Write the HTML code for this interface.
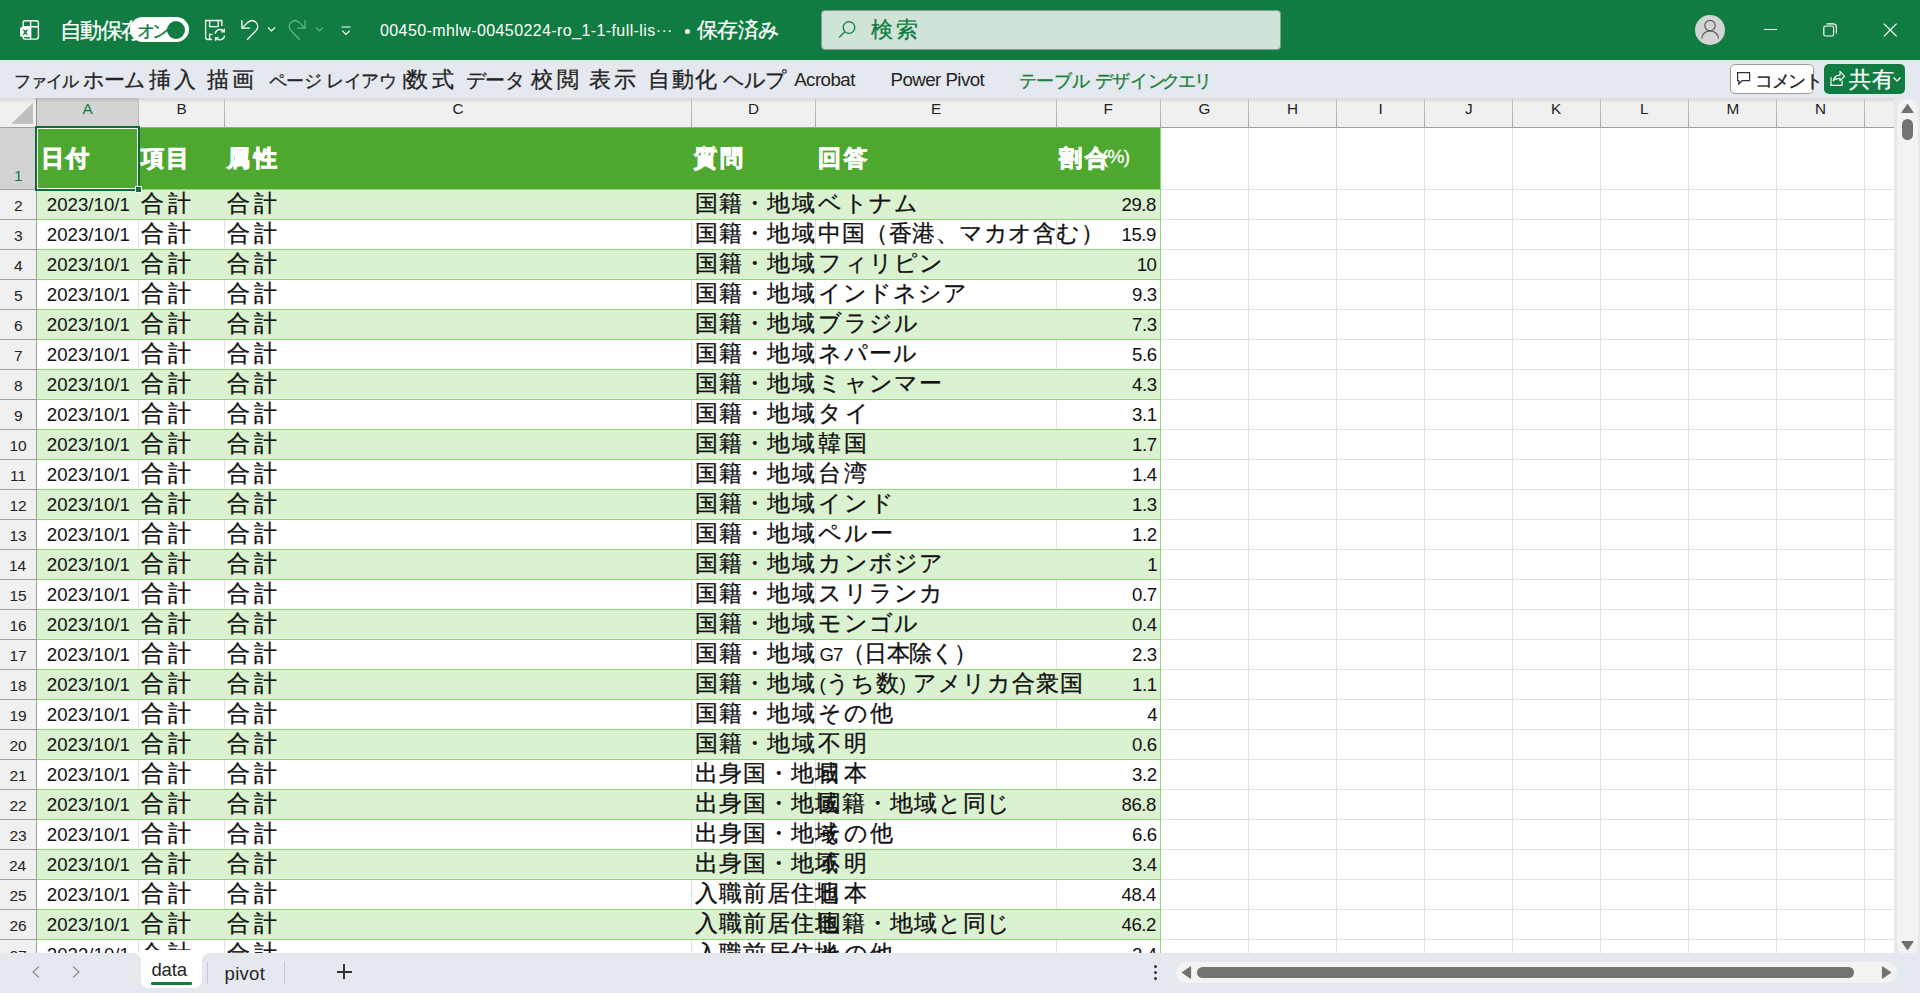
<!DOCTYPE html>
<html lang="ja"><head><meta charset="utf-8"><title>Excel - data</title>
<style>
html,body{margin:0;padding:0;width:1920px;height:993px;overflow:hidden;background:#fff}
body{position:relative;font-family:"Liberation Sans",sans-serif}
.r,.a,.t{position:absolute}
.t{white-space:nowrap;line-height:40px}
</style></head><body>
<div class="r" style="left:0px;top:0px;width:1920px;height:60px;background:#107C41"></div>
<svg class="a" style="left:14px;top:14px" width="32" height="32" viewBox="0 0 32 32" fill="none" stroke="#fff" stroke-width="1.4">
<path d="M11 6.7h11.3q2.1 0 2.1 2.1v14.3q0 2-2 2H11q-1.8 0-1.8-1.8V8.7q0-2 1.8-2z"/><path d="M16.6 6.7v18.4M9.2 12.7h15.2"/>
<rect x="6.1" y="12.9" width="11" height="10.1" rx="1.8" fill="#fff" stroke="none"/>
<path d="M9.4 15.6l4 5.2M13.4 15.6l-4 5.2" stroke="#107C41" stroke-width="1.5"/></svg>
<div class="t" style="left:60.00px;top:13px;font-size:16.00px;color:#fff;letter-spacing:-1.667px"><span style="font-size:21.50px;line-height:0;-webkit-text-stroke:0.3px">自動保存</span></div>
<div class="r" style="left:130px;top:17px;width:59px;height:25px;background:#fff;border-radius:12.5px"></div>
<div class="r" style="left:167px;top:21px;width:18px;height:18px;background:#107C41;border-radius:50%"></div>
<div class="t" style="left:137.00px;top:12px;font-size:15.00px;color:#107C41;letter-spacing:-3.000px"><span style="font-size:17.50px;line-height:0;-webkit-text-stroke:0.3px">オン</span></div>
<svg class="a" style="left:203px;top:18px" width="24" height="24" viewBox="0 0 24 24" fill="none" stroke="#fff" stroke-width="1.3">
<path d="M9 21.5H4.8q-2.2 0-2.2-2.2V2.5h16.2v5.6"/><path d="M6.6 2.5v6.2h8.6V2.5"/><path d="M6.6 21.5v-5.2h3"/>
<path d="M12.2 15.6a5 5 0 0 1 8.8-2.2M21.6 17.6a5 5 0 0 1-8.8 2.4"/><path d="M21.3 10.7v3.2h-3.2M12.5 22.8v-3.2h3.2"/></svg>
<svg class="a" style="left:239px;top:18px" width="24" height="24" viewBox="0 0 24 24" fill="none" stroke="#fff" stroke-width="1.3">
<path d="M2.9 2.3v7.9h8"/><path d="M3.2 9.9L8.8 4.4q4.6-4 8.4.2 3.4 4.1-.5 8.4L8.2 21.7"/></svg>
<svg class="a" style="left:266px;top:25px" width="11" height="9" viewBox="0 0 11 9" fill="none" stroke="#fff" stroke-width="1.2"><path d="M2 2.5l3.5 3.5 3.5-3.5"/></svg>
<svg class="a" style="left:284px;top:18px" width="24" height="24" viewBox="0 0 24 24" fill="none" stroke="#5fb487" stroke-width="1.3">
<path d="M21.1 2.3v7.9h-8"/><path d="M20.8 9.9L15.2 4.4q-4.6-4-8.4.2-3.4 4.1.5 8.4l8.5 8.7"/></svg>
<svg class="a" style="left:314px;top:25px" width="11" height="9" viewBox="0 0 11 9" fill="none" stroke="#5fb487" stroke-width="1.2"><path d="M2 2.5l3.5 3.5 3.5-3.5"/></svg>
<svg class="a" style="left:339px;top:24px" width="14" height="14" viewBox="0 0 14 14" fill="none" stroke="#fff" stroke-width="1.2"><path d="M2.5 3h9M3.2 6.6l3.8 3.8 3.8-3.8"/></svg>
<div class="t" style="left:380.00px;top:11px;font-size:16.00px;color:#fff;letter-spacing:0.405px">00450-mhlw-00450224-ro_1-1-full-lis···</div>
<div class="r" style="left:685px;top:29px;width:5px;height:5px;background:#fff;border-radius:50%"></div>
<div class="t" style="left:697.00px;top:12px;font-size:16.00px;color:#fff;letter-spacing:-0.667px"><span style="font-size:20.50px;line-height:0;-webkit-text-stroke:0.3px">保存済み</span></div>
<svg class="a" style="left:760px;top:24px" width="16" height="12" viewBox="0 0 16 12" fill="none" stroke="#fff" stroke-width="1.3"><path d="M2 2.5l6 6 6-6"/></svg>
<div class="r" style="left:821px;top:10px;width:460px;height:40px;background:#CFE3D6;border:1px solid #8a9c90;box-sizing:border-box;border-radius:4px"></div>
<svg class="a" style="left:836px;top:19px" width="22" height="22" viewBox="0 0 22 22" fill="none" stroke="#107C41" stroke-width="1.3"><circle cx="13" cy="8.5" r="5.8"/><path d="M8.8 12.7L3 18.6"/></svg>
<div class="t" style="left:871.00px;top:12px;font-size:16.00px;color:#107C41;letter-spacing:3.000px"><span style="font-size:21.50px;line-height:0;-webkit-text-stroke:0.3px">検索</span></div>
<div class="r" style="left:1695px;top:15px;width:30px;height:30px;background:#D4D4D4;border-radius:50%"></div>
<svg class="a" style="left:1699px;top:19px" width="22" height="22" viewBox="0 0 22 22" fill="none" stroke="#555" stroke-width="1.1"><circle cx="11" cy="6.6" r="5.2"/><path d="M2.7 19.6A8.4 7.6 0 0 1 19.5 19.6"/></svg>
<div class="r" style="left:1764px;top:29px;width:13px;height:1px;background:#fff"></div>
<svg class="a" style="left:1820px;top:20px" width="20" height="20" viewBox="0 0 20 20" fill="none" stroke="#fff" stroke-width="1.2"><rect x="3.8" y="6" width="9.8" height="10" rx="1.8"/><path d="M6.6 3.8h6.4q3.4 0 3.4 3.4v6.2"/></svg>
<svg class="a" style="left:1880px;top:20px" width="20" height="20" viewBox="0 0 20 20" fill="none" stroke="#fff" stroke-width="1.3"><path d="M3.8 3.6l12.8 12.8M16.6 3.6L3.8 16.4"/></svg>
<div class="r" style="left:0px;top:60px;width:1920px;height:38px;background:#E4E8EF"></div>
<div class="t" style="left:13.60px;top:62px;font-size:17.00px;color:#242424;letter-spacing:-0.867px"><span style="font-size:17.29px;line-height:0;-webkit-text-stroke:0.3px">ファイル</span></div>
<div class="t" style="left:83.00px;top:62px;font-size:17.00px;color:#242424;letter-spacing:-1.250px"><span style="font-size:20.77px;line-height:0;-webkit-text-stroke:0.3px">ホーム</span></div>
<div class="t" style="left:149.00px;top:62px;font-size:17.00px;color:#242424;letter-spacing:3.000px"><span style="font-size:22.00px;line-height:0;-webkit-text-stroke:0.3px">挿入</span></div>
<div class="t" style="left:207.00px;top:62px;font-size:17.00px;color:#242424;letter-spacing:3.000px"><span style="font-size:22.00px;line-height:0;-webkit-text-stroke:0.3px">描画</span></div>
<div class="t" style="left:268.50px;top:62px;font-size:17.00px;color:#242424;letter-spacing:-0.312px"><span style="font-size:17.81px;line-height:0;-webkit-text-stroke:0.3px">ページ</span> <span style="font-size:17.81px;line-height:0;-webkit-text-stroke:0.3px">レイアウト</span></div>
<div class="t" style="left:406.30px;top:62px;font-size:17.00px;color:#242424;letter-spacing:3.400px"><span style="font-size:22.00px;line-height:0;-webkit-text-stroke:0.3px">数式</span></div>
<div class="t" style="left:465.50px;top:62px;font-size:17.00px;color:#242424;letter-spacing:-0.100px"><span style="font-size:20.44px;line-height:0;-webkit-text-stroke:0.3px">データ</span></div>
<div class="t" style="left:531.30px;top:62px;font-size:17.00px;color:#242424;letter-spacing:3.400px"><span style="font-size:22.00px;line-height:0;-webkit-text-stroke:0.3px">校閲</span></div>
<div class="t" style="left:589.00px;top:62px;font-size:17.00px;color:#242424;letter-spacing:3.400px"><span style="font-size:22.00px;line-height:0;-webkit-text-stroke:0.3px">表示</span></div>
<div class="t" style="left:648.00px;top:62px;font-size:17.00px;color:#242424;letter-spacing:1.500px"><span style="font-size:22.00px;line-height:0;-webkit-text-stroke:0.3px">自動化</span></div>
<div class="t" style="left:723.00px;top:62px;font-size:17.00px;color:#242424;letter-spacing:-1.000px"><span style="font-size:21.00px;line-height:0;-webkit-text-stroke:0.3px">ヘルプ</span></div>
<div class="t" style="left:794.20px;top:60px;font-size:18.70px;color:#242424;letter-spacing:-0.533px">Acrobat</div>
<div class="t" style="left:890.60px;top:60px;font-size:18.70px;color:#242424;letter-spacing:-0.560px">Power Pivot</div>
<div class="t" style="left:1018.50px;top:62px;font-size:17.00px;color:#1A7F37;letter-spacing:-0.125px"><span style="font-size:18.04px;line-height:0;-webkit-text-stroke:0.3px">テーブル</span> <span style="font-size:18.04px;line-height:0;-webkit-text-stroke:0.3px">デザイン</span></div>
<div class="t" style="left:1161.70px;top:62px;font-size:17.00px;color:#1A7F37;letter-spacing:-1.850px"><span style="font-size:17.87px;line-height:0;-webkit-text-stroke:0.3px">クエリ</span></div>
<div class="r" style="left:1730px;top:64px;width:84px;height:30px;background:#fff;border:1px solid #9C9C9C;box-sizing:border-box;border-radius:5px"></div>
<svg class="a" style="left:1735px;top:70px" width="18" height="18" viewBox="0 0 18 18" fill="none" stroke="#333" stroke-width="1.2"><path d="M2.6 2.6h12v8.1H7.2l-3.4 3.3v-3.3H2.6z"/></svg>
<div class="t" style="left:1755.00px;top:62px;font-size:17.00px;color:#242424;letter-spacing:-1.333px"><span style="font-size:18.20px;line-height:0;-webkit-text-stroke:0.3px">コメント</span></div>
<div class="r" style="left:1824px;top:64px;width:81px;height:30px;background:#107C41;border-radius:5px"></div>
<svg class="a" style="left:1824px;top:64px" width="26" height="30" viewBox="0 0 26 30" fill="none" stroke="#fff" stroke-width="1.15" stroke-linejoin="round">
<path d="M7 13.3v8.1h11.1v-5"/><path d="M9.3 16.6q1.2-5.4 6.7-5.5V7.4l4.6 4.9-4.6 4.4v-2.4q-4.3 0-6.7 2.3z"/></svg>
<div class="t" style="left:1849.00px;top:62px;font-size:17.00px;color:#fff;letter-spacing:1.000px"><span style="font-size:22.00px;line-height:0;-webkit-text-stroke:0.3px">共有</span></div>
<svg class="a" style="left:1891px;top:75px" width="12" height="9" viewBox="0 0 12 9" fill="none" stroke="#fff" stroke-width="1.3"><path d="M2.5 2.5l3.5 3.5 3.5-3.5"/></svg>
<div class="r" style="left:0px;top:98px;width:1894px;height:29px;background:#F0F0F0"></div>
<div class="r" style="left:37px;top:98px;width:101px;height:29px;background:#D3D3D3"></div>
<div class="r" style="left:0px;top:98px;width:1894px;height:5px;background:linear-gradient(rgba(0,0,0,0.1),rgba(0,0,0,0))"></div>
<div class="r" style="left:0px;top:127px;width:1894px;height:1px;background:#A0A0A0"></div>
<svg class="a" style="left:0px;top:98px" width="36" height="29"><path d="M11.5 25.7L33 4.8v20.9z" fill="#BDBDBD"/></svg>
<div class="r" style="left:36px;top:98px;width:1px;height:29px;background:linear-gradient(#C4C4C4,#A8A8A8)"></div>
<div class="r" style="left:138px;top:98px;width:1px;height:29px;background:linear-gradient(#C4C4C4,#A8A8A8)"></div>
<div class="r" style="left:224px;top:98px;width:1px;height:29px;background:linear-gradient(#C4C4C4,#A8A8A8)"></div>
<div class="r" style="left:691px;top:98px;width:1px;height:29px;background:linear-gradient(#C4C4C4,#A8A8A8)"></div>
<div class="r" style="left:815px;top:98px;width:1px;height:29px;background:linear-gradient(#C4C4C4,#A8A8A8)"></div>
<div class="r" style="left:1056px;top:98px;width:1px;height:29px;background:linear-gradient(#C4C4C4,#A8A8A8)"></div>
<div class="r" style="left:1160px;top:98px;width:1px;height:29px;background:linear-gradient(#C4C4C4,#A8A8A8)"></div>
<div class="r" style="left:1248px;top:98px;width:1px;height:29px;background:linear-gradient(#C4C4C4,#A8A8A8)"></div>
<div class="r" style="left:1336px;top:98px;width:1px;height:29px;background:linear-gradient(#C4C4C4,#A8A8A8)"></div>
<div class="r" style="left:1424px;top:98px;width:1px;height:29px;background:linear-gradient(#C4C4C4,#A8A8A8)"></div>
<div class="r" style="left:1512px;top:98px;width:1px;height:29px;background:linear-gradient(#C4C4C4,#A8A8A8)"></div>
<div class="r" style="left:1600px;top:98px;width:1px;height:29px;background:linear-gradient(#C4C4C4,#A8A8A8)"></div>
<div class="r" style="left:1688px;top:98px;width:1px;height:29px;background:linear-gradient(#C4C4C4,#A8A8A8)"></div>
<div class="r" style="left:1776px;top:98px;width:1px;height:29px;background:linear-gradient(#C4C4C4,#A8A8A8)"></div>
<div class="r" style="left:1864px;top:98px;width:1px;height:29px;background:linear-gradient(#C4C4C4,#A8A8A8)"></div>
<div class="r" style="left:36px;top:98px;width:1px;height:30px;background:#8C8C8C"></div>
<div class="t" style="left:82.50px;top:89px;font-size:15.30px;color:#107C41">A</div>
<div class="t" style="left:176.50px;top:89px;font-size:15.30px;color:#222">B</div>
<div class="t" style="left:452.50px;top:89px;font-size:15.30px;color:#222">C</div>
<div class="t" style="left:748.00px;top:89px;font-size:15.30px;color:#222">D</div>
<div class="t" style="left:931.00px;top:89px;font-size:15.30px;color:#222">E</div>
<div class="t" style="left:1103.50px;top:89px;font-size:15.30px;color:#222">F</div>
<div class="t" style="left:1198.50px;top:89px;font-size:15.30px;color:#222">G</div>
<div class="t" style="left:1287.00px;top:89px;font-size:15.30px;color:#222">H</div>
<div class="t" style="left:1378.50px;top:89px;font-size:15.30px;color:#222">I</div>
<div class="t" style="left:1465.00px;top:89px;font-size:15.30px;color:#222">J</div>
<div class="t" style="left:1551.00px;top:89px;font-size:15.30px;color:#222">K</div>
<div class="t" style="left:1640.00px;top:89px;font-size:15.30px;color:#222">L</div>
<div class="t" style="left:1726.50px;top:89px;font-size:15.30px;color:#222">M</div>
<div class="t" style="left:1815.00px;top:89px;font-size:15.30px;color:#222">N</div>
<div class="r" style="left:37px;top:128px;width:1857px;height:825px;background:#fff"></div>
<div class="r" style="left:1248px;top:128px;width:1px;height:825px;background:#E1E1E1"></div>
<div class="r" style="left:1336px;top:128px;width:1px;height:825px;background:#E1E1E1"></div>
<div class="r" style="left:1424px;top:128px;width:1px;height:825px;background:#E1E1E1"></div>
<div class="r" style="left:1512px;top:128px;width:1px;height:825px;background:#E1E1E1"></div>
<div class="r" style="left:1600px;top:128px;width:1px;height:825px;background:#E1E1E1"></div>
<div class="r" style="left:1688px;top:128px;width:1px;height:825px;background:#E1E1E1"></div>
<div class="r" style="left:1776px;top:128px;width:1px;height:825px;background:#E1E1E1"></div>
<div class="r" style="left:1864px;top:128px;width:1px;height:825px;background:#E1E1E1"></div>
<div class="r" style="left:1161px;top:189px;width:733px;height:1px;background:#E1E1E1"></div>
<div class="r" style="left:1161px;top:219px;width:733px;height:1px;background:#E1E1E1"></div>
<div class="r" style="left:1161px;top:249px;width:733px;height:1px;background:#E1E1E1"></div>
<div class="r" style="left:1161px;top:279px;width:733px;height:1px;background:#E1E1E1"></div>
<div class="r" style="left:1161px;top:309px;width:733px;height:1px;background:#E1E1E1"></div>
<div class="r" style="left:1161px;top:339px;width:733px;height:1px;background:#E1E1E1"></div>
<div class="r" style="left:1161px;top:369px;width:733px;height:1px;background:#E1E1E1"></div>
<div class="r" style="left:1161px;top:399px;width:733px;height:1px;background:#E1E1E1"></div>
<div class="r" style="left:1161px;top:429px;width:733px;height:1px;background:#E1E1E1"></div>
<div class="r" style="left:1161px;top:459px;width:733px;height:1px;background:#E1E1E1"></div>
<div class="r" style="left:1161px;top:489px;width:733px;height:1px;background:#E1E1E1"></div>
<div class="r" style="left:1161px;top:519px;width:733px;height:1px;background:#E1E1E1"></div>
<div class="r" style="left:1161px;top:549px;width:733px;height:1px;background:#E1E1E1"></div>
<div class="r" style="left:1161px;top:579px;width:733px;height:1px;background:#E1E1E1"></div>
<div class="r" style="left:1161px;top:609px;width:733px;height:1px;background:#E1E1E1"></div>
<div class="r" style="left:1161px;top:639px;width:733px;height:1px;background:#E1E1E1"></div>
<div class="r" style="left:1161px;top:669px;width:733px;height:1px;background:#E1E1E1"></div>
<div class="r" style="left:1161px;top:699px;width:733px;height:1px;background:#E1E1E1"></div>
<div class="r" style="left:1161px;top:729px;width:733px;height:1px;background:#E1E1E1"></div>
<div class="r" style="left:1161px;top:759px;width:733px;height:1px;background:#E1E1E1"></div>
<div class="r" style="left:1161px;top:789px;width:733px;height:1px;background:#E1E1E1"></div>
<div class="r" style="left:1161px;top:819px;width:733px;height:1px;background:#E1E1E1"></div>
<div class="r" style="left:1161px;top:849px;width:733px;height:1px;background:#E1E1E1"></div>
<div class="r" style="left:1161px;top:879px;width:733px;height:1px;background:#E1E1E1"></div>
<div class="r" style="left:1161px;top:909px;width:733px;height:1px;background:#E1E1E1"></div>
<div class="r" style="left:1161px;top:939px;width:733px;height:1px;background:#E1E1E1"></div>
<div class="r" style="left:138px;top:220px;width:1px;height:29px;background:#E1E1E1"></div>
<div class="r" style="left:224px;top:220px;width:1px;height:29px;background:#E1E1E1"></div>
<div class="r" style="left:691px;top:220px;width:1px;height:29px;background:#E1E1E1"></div>
<div class="r" style="left:815px;top:220px;width:1px;height:29px;background:#E1E1E1"></div>
<div class="r" style="left:1056px;top:220px;width:1px;height:29px;background:#E1E1E1"></div>
<div class="r" style="left:138px;top:280px;width:1px;height:29px;background:#E1E1E1"></div>
<div class="r" style="left:224px;top:280px;width:1px;height:29px;background:#E1E1E1"></div>
<div class="r" style="left:691px;top:280px;width:1px;height:29px;background:#E1E1E1"></div>
<div class="r" style="left:815px;top:280px;width:1px;height:29px;background:#E1E1E1"></div>
<div class="r" style="left:1056px;top:280px;width:1px;height:29px;background:#E1E1E1"></div>
<div class="r" style="left:138px;top:340px;width:1px;height:29px;background:#E1E1E1"></div>
<div class="r" style="left:224px;top:340px;width:1px;height:29px;background:#E1E1E1"></div>
<div class="r" style="left:691px;top:340px;width:1px;height:29px;background:#E1E1E1"></div>
<div class="r" style="left:815px;top:340px;width:1px;height:29px;background:#E1E1E1"></div>
<div class="r" style="left:1056px;top:340px;width:1px;height:29px;background:#E1E1E1"></div>
<div class="r" style="left:138px;top:400px;width:1px;height:29px;background:#E1E1E1"></div>
<div class="r" style="left:224px;top:400px;width:1px;height:29px;background:#E1E1E1"></div>
<div class="r" style="left:691px;top:400px;width:1px;height:29px;background:#E1E1E1"></div>
<div class="r" style="left:815px;top:400px;width:1px;height:29px;background:#E1E1E1"></div>
<div class="r" style="left:1056px;top:400px;width:1px;height:29px;background:#E1E1E1"></div>
<div class="r" style="left:138px;top:460px;width:1px;height:29px;background:#E1E1E1"></div>
<div class="r" style="left:224px;top:460px;width:1px;height:29px;background:#E1E1E1"></div>
<div class="r" style="left:691px;top:460px;width:1px;height:29px;background:#E1E1E1"></div>
<div class="r" style="left:815px;top:460px;width:1px;height:29px;background:#E1E1E1"></div>
<div class="r" style="left:1056px;top:460px;width:1px;height:29px;background:#E1E1E1"></div>
<div class="r" style="left:138px;top:520px;width:1px;height:29px;background:#E1E1E1"></div>
<div class="r" style="left:224px;top:520px;width:1px;height:29px;background:#E1E1E1"></div>
<div class="r" style="left:691px;top:520px;width:1px;height:29px;background:#E1E1E1"></div>
<div class="r" style="left:815px;top:520px;width:1px;height:29px;background:#E1E1E1"></div>
<div class="r" style="left:1056px;top:520px;width:1px;height:29px;background:#E1E1E1"></div>
<div class="r" style="left:138px;top:580px;width:1px;height:29px;background:#E1E1E1"></div>
<div class="r" style="left:224px;top:580px;width:1px;height:29px;background:#E1E1E1"></div>
<div class="r" style="left:691px;top:580px;width:1px;height:29px;background:#E1E1E1"></div>
<div class="r" style="left:815px;top:580px;width:1px;height:29px;background:#E1E1E1"></div>
<div class="r" style="left:1056px;top:580px;width:1px;height:29px;background:#E1E1E1"></div>
<div class="r" style="left:138px;top:640px;width:1px;height:29px;background:#E1E1E1"></div>
<div class="r" style="left:224px;top:640px;width:1px;height:29px;background:#E1E1E1"></div>
<div class="r" style="left:691px;top:640px;width:1px;height:29px;background:#E1E1E1"></div>
<div class="r" style="left:815px;top:640px;width:1px;height:29px;background:#E1E1E1"></div>
<div class="r" style="left:1056px;top:640px;width:1px;height:29px;background:#E1E1E1"></div>
<div class="r" style="left:138px;top:700px;width:1px;height:29px;background:#E1E1E1"></div>
<div class="r" style="left:224px;top:700px;width:1px;height:29px;background:#E1E1E1"></div>
<div class="r" style="left:691px;top:700px;width:1px;height:29px;background:#E1E1E1"></div>
<div class="r" style="left:815px;top:700px;width:1px;height:29px;background:#E1E1E1"></div>
<div class="r" style="left:1056px;top:700px;width:1px;height:29px;background:#E1E1E1"></div>
<div class="r" style="left:138px;top:760px;width:1px;height:29px;background:#E1E1E1"></div>
<div class="r" style="left:224px;top:760px;width:1px;height:29px;background:#E1E1E1"></div>
<div class="r" style="left:691px;top:760px;width:1px;height:29px;background:#E1E1E1"></div>
<div class="r" style="left:815px;top:760px;width:1px;height:29px;background:#E1E1E1"></div>
<div class="r" style="left:1056px;top:760px;width:1px;height:29px;background:#E1E1E1"></div>
<div class="r" style="left:138px;top:820px;width:1px;height:29px;background:#E1E1E1"></div>
<div class="r" style="left:224px;top:820px;width:1px;height:29px;background:#E1E1E1"></div>
<div class="r" style="left:691px;top:820px;width:1px;height:29px;background:#E1E1E1"></div>
<div class="r" style="left:815px;top:820px;width:1px;height:29px;background:#E1E1E1"></div>
<div class="r" style="left:1056px;top:820px;width:1px;height:29px;background:#E1E1E1"></div>
<div class="r" style="left:138px;top:880px;width:1px;height:29px;background:#E1E1E1"></div>
<div class="r" style="left:224px;top:880px;width:1px;height:29px;background:#E1E1E1"></div>
<div class="r" style="left:691px;top:880px;width:1px;height:29px;background:#E1E1E1"></div>
<div class="r" style="left:815px;top:880px;width:1px;height:29px;background:#E1E1E1"></div>
<div class="r" style="left:1056px;top:880px;width:1px;height:29px;background:#E1E1E1"></div>
<div class="r" style="left:138px;top:940px;width:1px;height:13px;background:#E1E1E1"></div>
<div class="r" style="left:224px;top:940px;width:1px;height:13px;background:#E1E1E1"></div>
<div class="r" style="left:691px;top:940px;width:1px;height:13px;background:#E1E1E1"></div>
<div class="r" style="left:815px;top:940px;width:1px;height:13px;background:#E1E1E1"></div>
<div class="r" style="left:1056px;top:940px;width:1px;height:13px;background:#E1E1E1"></div>
<div class="r" style="left:37px;top:128px;width:1123px;height:61px;background:#4EA72E"></div>
<div class="r" style="left:37px;top:190px;width:1123px;height:29px;background:#DAF2D0"></div>
<div class="r" style="left:37px;top:250px;width:1123px;height:29px;background:#DAF2D0"></div>
<div class="r" style="left:37px;top:310px;width:1123px;height:29px;background:#DAF2D0"></div>
<div class="r" style="left:37px;top:370px;width:1123px;height:29px;background:#DAF2D0"></div>
<div class="r" style="left:37px;top:430px;width:1123px;height:29px;background:#DAF2D0"></div>
<div class="r" style="left:37px;top:490px;width:1123px;height:29px;background:#DAF2D0"></div>
<div class="r" style="left:37px;top:550px;width:1123px;height:29px;background:#DAF2D0"></div>
<div class="r" style="left:37px;top:610px;width:1123px;height:29px;background:#DAF2D0"></div>
<div class="r" style="left:37px;top:670px;width:1123px;height:29px;background:#DAF2D0"></div>
<div class="r" style="left:37px;top:730px;width:1123px;height:29px;background:#DAF2D0"></div>
<div class="r" style="left:37px;top:790px;width:1123px;height:29px;background:#DAF2D0"></div>
<div class="r" style="left:37px;top:850px;width:1123px;height:29px;background:#DAF2D0"></div>
<div class="r" style="left:37px;top:910px;width:1123px;height:29px;background:#DAF2D0"></div>
<div class="r" style="left:37px;top:189px;width:1124px;height:1px;background:#8ED973"></div>
<div class="r" style="left:37px;top:219px;width:1124px;height:1px;background:#8ED973"></div>
<div class="r" style="left:37px;top:249px;width:1124px;height:1px;background:#8ED973"></div>
<div class="r" style="left:37px;top:279px;width:1124px;height:1px;background:#8ED973"></div>
<div class="r" style="left:37px;top:309px;width:1124px;height:1px;background:#8ED973"></div>
<div class="r" style="left:37px;top:339px;width:1124px;height:1px;background:#8ED973"></div>
<div class="r" style="left:37px;top:369px;width:1124px;height:1px;background:#8ED973"></div>
<div class="r" style="left:37px;top:399px;width:1124px;height:1px;background:#8ED973"></div>
<div class="r" style="left:37px;top:429px;width:1124px;height:1px;background:#8ED973"></div>
<div class="r" style="left:37px;top:459px;width:1124px;height:1px;background:#8ED973"></div>
<div class="r" style="left:37px;top:489px;width:1124px;height:1px;background:#8ED973"></div>
<div class="r" style="left:37px;top:519px;width:1124px;height:1px;background:#8ED973"></div>
<div class="r" style="left:37px;top:549px;width:1124px;height:1px;background:#8ED973"></div>
<div class="r" style="left:37px;top:579px;width:1124px;height:1px;background:#8ED973"></div>
<div class="r" style="left:37px;top:609px;width:1124px;height:1px;background:#8ED973"></div>
<div class="r" style="left:37px;top:639px;width:1124px;height:1px;background:#8ED973"></div>
<div class="r" style="left:37px;top:669px;width:1124px;height:1px;background:#8ED973"></div>
<div class="r" style="left:37px;top:699px;width:1124px;height:1px;background:#8ED973"></div>
<div class="r" style="left:37px;top:729px;width:1124px;height:1px;background:#8ED973"></div>
<div class="r" style="left:37px;top:759px;width:1124px;height:1px;background:#8ED973"></div>
<div class="r" style="left:37px;top:789px;width:1124px;height:1px;background:#8ED973"></div>
<div class="r" style="left:37px;top:819px;width:1124px;height:1px;background:#8ED973"></div>
<div class="r" style="left:37px;top:849px;width:1124px;height:1px;background:#8ED973"></div>
<div class="r" style="left:37px;top:879px;width:1124px;height:1px;background:#8ED973"></div>
<div class="r" style="left:37px;top:909px;width:1124px;height:1px;background:#8ED973"></div>
<div class="r" style="left:37px;top:939px;width:1124px;height:1px;background:#8ED973"></div>
<div class="r" style="left:1160px;top:128px;width:1px;height:825px;background:#8ED973"></div>
<div class="r" style="left:0px;top:128px;width:36px;height:825px;background:#F0F0F0"></div>
<div class="r" style="left:0px;top:128px;width:36px;height:61px;background:#D3D3D3"></div>
<div class="r" style="left:36px;top:128px;width:1px;height:825px;background:#9E9E9E"></div>
<div class="r" style="left:0px;top:189px;width:36px;height:1px;background:#A0A0A0"></div>
<div class="r" style="left:0px;top:219px;width:36px;height:1px;background:#A0A0A0"></div>
<div class="r" style="left:0px;top:249px;width:36px;height:1px;background:#A0A0A0"></div>
<div class="r" style="left:0px;top:279px;width:36px;height:1px;background:#A0A0A0"></div>
<div class="r" style="left:0px;top:309px;width:36px;height:1px;background:#A0A0A0"></div>
<div class="r" style="left:0px;top:339px;width:36px;height:1px;background:#A0A0A0"></div>
<div class="r" style="left:0px;top:369px;width:36px;height:1px;background:#A0A0A0"></div>
<div class="r" style="left:0px;top:399px;width:36px;height:1px;background:#A0A0A0"></div>
<div class="r" style="left:0px;top:429px;width:36px;height:1px;background:#A0A0A0"></div>
<div class="r" style="left:0px;top:459px;width:36px;height:1px;background:#A0A0A0"></div>
<div class="r" style="left:0px;top:489px;width:36px;height:1px;background:#A0A0A0"></div>
<div class="r" style="left:0px;top:519px;width:36px;height:1px;background:#A0A0A0"></div>
<div class="r" style="left:0px;top:549px;width:36px;height:1px;background:#A0A0A0"></div>
<div class="r" style="left:0px;top:579px;width:36px;height:1px;background:#A0A0A0"></div>
<div class="r" style="left:0px;top:609px;width:36px;height:1px;background:#A0A0A0"></div>
<div class="r" style="left:0px;top:639px;width:36px;height:1px;background:#A0A0A0"></div>
<div class="r" style="left:0px;top:669px;width:36px;height:1px;background:#A0A0A0"></div>
<div class="r" style="left:0px;top:699px;width:36px;height:1px;background:#A0A0A0"></div>
<div class="r" style="left:0px;top:729px;width:36px;height:1px;background:#A0A0A0"></div>
<div class="r" style="left:0px;top:759px;width:36px;height:1px;background:#A0A0A0"></div>
<div class="r" style="left:0px;top:789px;width:36px;height:1px;background:#A0A0A0"></div>
<div class="r" style="left:0px;top:819px;width:36px;height:1px;background:#A0A0A0"></div>
<div class="r" style="left:0px;top:849px;width:36px;height:1px;background:#A0A0A0"></div>
<div class="r" style="left:0px;top:879px;width:36px;height:1px;background:#A0A0A0"></div>
<div class="r" style="left:0px;top:909px;width:36px;height:1px;background:#A0A0A0"></div>
<div class="r" style="left:0px;top:939px;width:36px;height:1px;background:#A0A0A0"></div>
<div class="t" style="left:14.00px;top:156px;font-size:15.50px;color:#107C41">1</div>
<div class="t" style="left:14.00px;top:186px;font-size:15.50px;color:#222">2</div>
<div class="t" style="left:14.00px;top:216px;font-size:15.50px;color:#222">3</div>
<div class="t" style="left:14.00px;top:246px;font-size:15.50px;color:#222">4</div>
<div class="t" style="left:14.00px;top:276px;font-size:15.50px;color:#222">5</div>
<div class="t" style="left:14.00px;top:306px;font-size:15.50px;color:#222">6</div>
<div class="t" style="left:14.00px;top:336px;font-size:15.50px;color:#222">7</div>
<div class="t" style="left:14.00px;top:366px;font-size:15.50px;color:#222">8</div>
<div class="t" style="left:14.00px;top:396px;font-size:15.50px;color:#222">9</div>
<div class="t" style="left:9.50px;top:426px;font-size:15.50px;color:#222">10</div>
<div class="t" style="left:10.00px;top:456px;font-size:15.50px;color:#222">11</div>
<div class="t" style="left:9.50px;top:486px;font-size:15.50px;color:#222">12</div>
<div class="t" style="left:9.50px;top:516px;font-size:15.50px;color:#222">13</div>
<div class="t" style="left:9.00px;top:546px;font-size:15.50px;color:#222">14</div>
<div class="t" style="left:9.50px;top:576px;font-size:15.50px;color:#222">15</div>
<div class="t" style="left:9.50px;top:606px;font-size:15.50px;color:#222">16</div>
<div class="t" style="left:9.50px;top:636px;font-size:15.50px;color:#222">17</div>
<div class="t" style="left:9.50px;top:666px;font-size:15.50px;color:#222">18</div>
<div class="t" style="left:9.50px;top:696px;font-size:15.50px;color:#222">19</div>
<div class="t" style="left:9.50px;top:726px;font-size:15.50px;color:#222">20</div>
<div class="t" style="left:9.50px;top:756px;font-size:15.50px;color:#222">21</div>
<div class="t" style="left:9.50px;top:786px;font-size:15.50px;color:#222">22</div>
<div class="t" style="left:9.50px;top:816px;font-size:15.50px;color:#222">23</div>
<div class="t" style="left:9.00px;top:846px;font-size:15.50px;color:#222">24</div>
<div class="t" style="left:9.50px;top:876px;font-size:15.50px;color:#222">25</div>
<div class="t" style="left:9.50px;top:906px;font-size:15.50px;color:#222">26</div>
<div class="t" style="left:9.50px;top:936px;font-size:15.50px;color:#222">27</div>
<div class="t" style="left:40.50px;top:141px;font-size:16.00px;color:#fff;font-weight:bold;letter-spacing:2.100px"><span style="font-size:22.50px;line-height:0;-webkit-text-stroke:1.0px">日付</span></div>
<div class="t" style="left:140.50px;top:141px;font-size:16.00px;color:#fff;font-weight:bold;letter-spacing:2.100px"><span style="font-size:22.50px;line-height:0;-webkit-text-stroke:1.0px">項目</span></div>
<div class="t" style="left:226.70px;top:141px;font-size:16.00px;color:#fff;font-weight:bold;letter-spacing:4.000px"><span style="font-size:22.50px;line-height:0;-webkit-text-stroke:1.0px">属性</span></div>
<div class="t" style="left:693.60px;top:141px;font-size:16.00px;color:#fff;font-weight:bold;letter-spacing:3.400px"><span style="font-size:22.50px;line-height:0;-webkit-text-stroke:1.0px">質問</span></div>
<div class="t" style="left:818.00px;top:141px;font-size:16.00px;color:#fff;font-weight:bold;letter-spacing:2.700px"><span style="font-size:22.50px;line-height:0;-webkit-text-stroke:1.0px">回答</span></div>
<div class="t" style="left:1058.80px;top:141px;font-size:16.00px;color:#fff;font-weight:bold;letter-spacing:3.600px"><span style="font-size:22.50px;line-height:0;-webkit-text-stroke:1.0px">割合</span></div>
<div class="t" style="left:1101.70px;top:137px;font-size:19.00px;color:#fff;letter-spacing:-0.550px;-webkit-text-stroke:0.3px #fff">(%)</div>
<div class="t" style="left:46.80px;top:185px;font-size:18.60px;color:#111;letter-spacing:0.050px">2023/10/1</div>
<div class="t" style="left:140.80px;top:185px;font-size:18.00px;color:#111;letter-spacing:4.500px"><span style="font-size:23.40px;line-height:0;-webkit-text-stroke:0.3px">合計</span></div>
<div class="t" style="left:226.80px;top:185px;font-size:18.00px;color:#111;letter-spacing:4.500px"><span style="font-size:23.40px;line-height:0;-webkit-text-stroke:0.3px">合計</span></div>
<div class="t" style="left:694.60px;top:185px;font-size:18.00px;color:#111;letter-spacing:1.250px"><span style="font-size:23.40px;line-height:0;-webkit-text-stroke:0.3px">国籍・地域</span></div>
<div class="t" style="left:818.40px;top:185px;font-size:18.60px;color:#111;letter-spacing:1.333px"><span style="font-size:23.40px;line-height:0;-webkit-text-stroke:0.3px">ベトナム</span></div>
<div class="t" style="left:1121.55px;top:185px;font-size:18.60px;color:#111;letter-spacing:-0.450px">29.8</div>
<div class="t" style="left:46.80px;top:215px;font-size:18.60px;color:#111;letter-spacing:0.050px">2023/10/1</div>
<div class="t" style="left:140.80px;top:215px;font-size:18.00px;color:#111;letter-spacing:4.500px"><span style="font-size:23.40px;line-height:0;-webkit-text-stroke:0.3px">合計</span></div>
<div class="t" style="left:226.80px;top:215px;font-size:18.00px;color:#111;letter-spacing:4.500px"><span style="font-size:23.40px;line-height:0;-webkit-text-stroke:0.3px">合計</span></div>
<div class="t" style="left:694.60px;top:215px;font-size:18.00px;color:#111;letter-spacing:1.250px"><span style="font-size:23.40px;line-height:0;-webkit-text-stroke:0.3px">国籍・地域</span></div>
<div class="t" style="left:818.40px;top:215px;font-size:18.60px;color:#111;letter-spacing:0.491px"><span style="font-size:23.40px;line-height:0;-webkit-text-stroke:0.3px">中国（香港、マカオ含む）</span></div>
<div class="t" style="left:1121.55px;top:215px;font-size:18.60px;color:#111;letter-spacing:-0.450px">15.9</div>
<div class="t" style="left:46.80px;top:245px;font-size:18.60px;color:#111;letter-spacing:0.050px">2023/10/1</div>
<div class="t" style="left:140.80px;top:245px;font-size:18.00px;color:#111;letter-spacing:4.500px"><span style="font-size:23.40px;line-height:0;-webkit-text-stroke:0.3px">合計</span></div>
<div class="t" style="left:226.80px;top:245px;font-size:18.00px;color:#111;letter-spacing:4.500px"><span style="font-size:23.40px;line-height:0;-webkit-text-stroke:0.3px">合計</span></div>
<div class="t" style="left:694.60px;top:245px;font-size:18.00px;color:#111;letter-spacing:1.250px"><span style="font-size:23.40px;line-height:0;-webkit-text-stroke:0.3px">国籍・地域</span></div>
<div class="t" style="left:818.40px;top:245px;font-size:18.60px;color:#111;letter-spacing:1.125px"><span style="font-size:23.40px;line-height:0;-webkit-text-stroke:0.3px">フィリピン</span></div>
<div class="t" style="left:1136.65px;top:245px;font-size:18.60px;color:#111;letter-spacing:-0.450px">10</div>
<div class="t" style="left:46.80px;top:275px;font-size:18.60px;color:#111;letter-spacing:0.050px">2023/10/1</div>
<div class="t" style="left:140.80px;top:275px;font-size:18.00px;color:#111;letter-spacing:4.500px"><span style="font-size:23.40px;line-height:0;-webkit-text-stroke:0.3px">合計</span></div>
<div class="t" style="left:226.80px;top:275px;font-size:18.00px;color:#111;letter-spacing:4.500px"><span style="font-size:23.40px;line-height:0;-webkit-text-stroke:0.3px">合計</span></div>
<div class="t" style="left:694.60px;top:275px;font-size:18.00px;color:#111;letter-spacing:1.250px"><span style="font-size:23.40px;line-height:0;-webkit-text-stroke:0.3px">国籍・地域</span></div>
<div class="t" style="left:818.40px;top:275px;font-size:18.60px;color:#111;letter-spacing:1.000px"><span style="font-size:23.40px;line-height:0;-webkit-text-stroke:0.3px">インドネシア</span></div>
<div class="t" style="left:1132.10px;top:275px;font-size:18.60px;color:#111;letter-spacing:-0.450px">9.3</div>
<div class="t" style="left:46.80px;top:305px;font-size:18.60px;color:#111;letter-spacing:0.050px">2023/10/1</div>
<div class="t" style="left:140.80px;top:305px;font-size:18.00px;color:#111;letter-spacing:4.500px"><span style="font-size:23.40px;line-height:0;-webkit-text-stroke:0.3px">合計</span></div>
<div class="t" style="left:226.80px;top:305px;font-size:18.00px;color:#111;letter-spacing:4.500px"><span style="font-size:23.40px;line-height:0;-webkit-text-stroke:0.3px">合計</span></div>
<div class="t" style="left:694.60px;top:305px;font-size:18.00px;color:#111;letter-spacing:1.250px"><span style="font-size:23.40px;line-height:0;-webkit-text-stroke:0.3px">国籍・地域</span></div>
<div class="t" style="left:818.40px;top:305px;font-size:18.60px;color:#111;letter-spacing:1.333px"><span style="font-size:23.40px;line-height:0;-webkit-text-stroke:0.3px">ブラジル</span></div>
<div class="t" style="left:1132.10px;top:305px;font-size:18.60px;color:#111;letter-spacing:-0.450px">7.3</div>
<div class="t" style="left:46.80px;top:335px;font-size:18.60px;color:#111;letter-spacing:0.050px">2023/10/1</div>
<div class="t" style="left:140.80px;top:335px;font-size:18.00px;color:#111;letter-spacing:4.500px"><span style="font-size:23.40px;line-height:0;-webkit-text-stroke:0.3px">合計</span></div>
<div class="t" style="left:226.80px;top:335px;font-size:18.00px;color:#111;letter-spacing:4.500px"><span style="font-size:23.40px;line-height:0;-webkit-text-stroke:0.3px">合計</span></div>
<div class="t" style="left:694.60px;top:335px;font-size:18.00px;color:#111;letter-spacing:1.250px"><span style="font-size:23.40px;line-height:0;-webkit-text-stroke:0.3px">国籍・地域</span></div>
<div class="t" style="left:818.40px;top:335px;font-size:18.60px;color:#111;letter-spacing:1.333px"><span style="font-size:23.40px;line-height:0;-webkit-text-stroke:0.3px">ネパール</span></div>
<div class="t" style="left:1132.10px;top:335px;font-size:18.60px;color:#111;letter-spacing:-0.450px">5.6</div>
<div class="t" style="left:46.80px;top:365px;font-size:18.60px;color:#111;letter-spacing:0.050px">2023/10/1</div>
<div class="t" style="left:140.80px;top:365px;font-size:18.00px;color:#111;letter-spacing:4.500px"><span style="font-size:23.40px;line-height:0;-webkit-text-stroke:0.3px">合計</span></div>
<div class="t" style="left:226.80px;top:365px;font-size:18.00px;color:#111;letter-spacing:4.500px"><span style="font-size:23.40px;line-height:0;-webkit-text-stroke:0.3px">合計</span></div>
<div class="t" style="left:694.60px;top:365px;font-size:18.00px;color:#111;letter-spacing:1.250px"><span style="font-size:23.40px;line-height:0;-webkit-text-stroke:0.3px">国籍・地域</span></div>
<div class="t" style="left:818.40px;top:365px;font-size:18.60px;color:#111;letter-spacing:1.125px"><span style="font-size:23.40px;line-height:0;-webkit-text-stroke:0.3px">ミャンマー</span></div>
<div class="t" style="left:1132.10px;top:365px;font-size:18.60px;color:#111;letter-spacing:-0.450px">4.3</div>
<div class="t" style="left:46.80px;top:395px;font-size:18.60px;color:#111;letter-spacing:0.050px">2023/10/1</div>
<div class="t" style="left:140.80px;top:395px;font-size:18.00px;color:#111;letter-spacing:4.500px"><span style="font-size:23.40px;line-height:0;-webkit-text-stroke:0.3px">合計</span></div>
<div class="t" style="left:226.80px;top:395px;font-size:18.00px;color:#111;letter-spacing:4.500px"><span style="font-size:23.40px;line-height:0;-webkit-text-stroke:0.3px">合計</span></div>
<div class="t" style="left:694.60px;top:395px;font-size:18.00px;color:#111;letter-spacing:1.250px"><span style="font-size:23.40px;line-height:0;-webkit-text-stroke:0.3px">国籍・地域</span></div>
<div class="t" style="left:818.40px;top:395px;font-size:18.60px;color:#111;letter-spacing:3.000px"><span style="font-size:23.40px;line-height:0;-webkit-text-stroke:0.3px">タイ</span></div>
<div class="t" style="left:1132.10px;top:395px;font-size:18.60px;color:#111;letter-spacing:-0.450px">3.1</div>
<div class="t" style="left:46.80px;top:425px;font-size:18.60px;color:#111;letter-spacing:0.050px">2023/10/1</div>
<div class="t" style="left:140.80px;top:425px;font-size:18.00px;color:#111;letter-spacing:4.500px"><span style="font-size:23.40px;line-height:0;-webkit-text-stroke:0.3px">合計</span></div>
<div class="t" style="left:226.80px;top:425px;font-size:18.00px;color:#111;letter-spacing:4.500px"><span style="font-size:23.40px;line-height:0;-webkit-text-stroke:0.3px">合計</span></div>
<div class="t" style="left:694.60px;top:425px;font-size:18.00px;color:#111;letter-spacing:1.250px"><span style="font-size:23.40px;line-height:0;-webkit-text-stroke:0.3px">国籍・地域</span></div>
<div class="t" style="left:818.40px;top:425px;font-size:18.60px;color:#111;letter-spacing:3.000px"><span style="font-size:23.40px;line-height:0;-webkit-text-stroke:0.3px">韓国</span></div>
<div class="t" style="left:1132.10px;top:425px;font-size:18.60px;color:#111;letter-spacing:-0.450px">1.7</div>
<div class="t" style="left:46.80px;top:455px;font-size:18.60px;color:#111;letter-spacing:0.050px">2023/10/1</div>
<div class="t" style="left:140.80px;top:455px;font-size:18.00px;color:#111;letter-spacing:4.500px"><span style="font-size:23.40px;line-height:0;-webkit-text-stroke:0.3px">合計</span></div>
<div class="t" style="left:226.80px;top:455px;font-size:18.00px;color:#111;letter-spacing:4.500px"><span style="font-size:23.40px;line-height:0;-webkit-text-stroke:0.3px">合計</span></div>
<div class="t" style="left:694.60px;top:455px;font-size:18.00px;color:#111;letter-spacing:1.250px"><span style="font-size:23.40px;line-height:0;-webkit-text-stroke:0.3px">国籍・地域</span></div>
<div class="t" style="left:818.40px;top:455px;font-size:18.60px;color:#111;letter-spacing:3.000px"><span style="font-size:23.40px;line-height:0;-webkit-text-stroke:0.3px">台湾</span></div>
<div class="t" style="left:1132.10px;top:455px;font-size:18.60px;color:#111;letter-spacing:-0.450px">1.4</div>
<div class="t" style="left:46.80px;top:485px;font-size:18.60px;color:#111;letter-spacing:0.050px">2023/10/1</div>
<div class="t" style="left:140.80px;top:485px;font-size:18.00px;color:#111;letter-spacing:4.500px"><span style="font-size:23.40px;line-height:0;-webkit-text-stroke:0.3px">合計</span></div>
<div class="t" style="left:226.80px;top:485px;font-size:18.00px;color:#111;letter-spacing:4.500px"><span style="font-size:23.40px;line-height:0;-webkit-text-stroke:0.3px">合計</span></div>
<div class="t" style="left:694.60px;top:485px;font-size:18.00px;color:#111;letter-spacing:1.250px"><span style="font-size:23.40px;line-height:0;-webkit-text-stroke:0.3px">国籍・地域</span></div>
<div class="t" style="left:818.40px;top:485px;font-size:18.60px;color:#111;letter-spacing:1.750px"><span style="font-size:23.40px;line-height:0;-webkit-text-stroke:0.3px">インド</span></div>
<div class="t" style="left:1132.10px;top:485px;font-size:18.60px;color:#111;letter-spacing:-0.450px">1.3</div>
<div class="t" style="left:46.80px;top:515px;font-size:18.60px;color:#111;letter-spacing:0.050px">2023/10/1</div>
<div class="t" style="left:140.80px;top:515px;font-size:18.00px;color:#111;letter-spacing:4.500px"><span style="font-size:23.40px;line-height:0;-webkit-text-stroke:0.3px">合計</span></div>
<div class="t" style="left:226.80px;top:515px;font-size:18.00px;color:#111;letter-spacing:4.500px"><span style="font-size:23.40px;line-height:0;-webkit-text-stroke:0.3px">合計</span></div>
<div class="t" style="left:694.60px;top:515px;font-size:18.00px;color:#111;letter-spacing:1.250px"><span style="font-size:23.40px;line-height:0;-webkit-text-stroke:0.3px">国籍・地域</span></div>
<div class="t" style="left:818.40px;top:515px;font-size:18.60px;color:#111;letter-spacing:1.750px"><span style="font-size:23.40px;line-height:0;-webkit-text-stroke:0.3px">ペルー</span></div>
<div class="t" style="left:1132.10px;top:515px;font-size:18.60px;color:#111;letter-spacing:-0.450px">1.2</div>
<div class="t" style="left:46.80px;top:545px;font-size:18.60px;color:#111;letter-spacing:0.050px">2023/10/1</div>
<div class="t" style="left:140.80px;top:545px;font-size:18.00px;color:#111;letter-spacing:4.500px"><span style="font-size:23.40px;line-height:0;-webkit-text-stroke:0.3px">合計</span></div>
<div class="t" style="left:226.80px;top:545px;font-size:18.00px;color:#111;letter-spacing:4.500px"><span style="font-size:23.40px;line-height:0;-webkit-text-stroke:0.3px">合計</span></div>
<div class="t" style="left:694.60px;top:545px;font-size:18.00px;color:#111;letter-spacing:1.250px"><span style="font-size:23.40px;line-height:0;-webkit-text-stroke:0.3px">国籍・地域</span></div>
<div class="t" style="left:818.40px;top:545px;font-size:18.60px;color:#111;letter-spacing:1.125px"><span style="font-size:23.40px;line-height:0;-webkit-text-stroke:0.3px">カンボジア</span></div>
<div class="t" style="left:1147.20px;top:545px;font-size:18.60px;color:#111;letter-spacing:-0.450px">1</div>
<div class="t" style="left:46.80px;top:575px;font-size:18.60px;color:#111;letter-spacing:0.050px">2023/10/1</div>
<div class="t" style="left:140.80px;top:575px;font-size:18.00px;color:#111;letter-spacing:4.500px"><span style="font-size:23.40px;line-height:0;-webkit-text-stroke:0.3px">合計</span></div>
<div class="t" style="left:226.80px;top:575px;font-size:18.00px;color:#111;letter-spacing:4.500px"><span style="font-size:23.40px;line-height:0;-webkit-text-stroke:0.3px">合計</span></div>
<div class="t" style="left:694.60px;top:575px;font-size:18.00px;color:#111;letter-spacing:1.250px"><span style="font-size:23.40px;line-height:0;-webkit-text-stroke:0.3px">国籍・地域</span></div>
<div class="t" style="left:818.40px;top:575px;font-size:18.60px;color:#111;letter-spacing:1.125px"><span style="font-size:23.40px;line-height:0;-webkit-text-stroke:0.3px">スリランカ</span></div>
<div class="t" style="left:1132.10px;top:575px;font-size:18.60px;color:#111;letter-spacing:-0.450px">0.7</div>
<div class="t" style="left:46.80px;top:605px;font-size:18.60px;color:#111;letter-spacing:0.050px">2023/10/1</div>
<div class="t" style="left:140.80px;top:605px;font-size:18.00px;color:#111;letter-spacing:4.500px"><span style="font-size:23.40px;line-height:0;-webkit-text-stroke:0.3px">合計</span></div>
<div class="t" style="left:226.80px;top:605px;font-size:18.00px;color:#111;letter-spacing:4.500px"><span style="font-size:23.40px;line-height:0;-webkit-text-stroke:0.3px">合計</span></div>
<div class="t" style="left:694.60px;top:605px;font-size:18.00px;color:#111;letter-spacing:1.250px"><span style="font-size:23.40px;line-height:0;-webkit-text-stroke:0.3px">国籍・地域</span></div>
<div class="t" style="left:818.40px;top:605px;font-size:18.60px;color:#111;letter-spacing:1.333px"><span style="font-size:23.40px;line-height:0;-webkit-text-stroke:0.3px">モンゴル</span></div>
<div class="t" style="left:1132.10px;top:605px;font-size:18.60px;color:#111;letter-spacing:-0.450px">0.4</div>
<div class="t" style="left:46.80px;top:635px;font-size:18.60px;color:#111;letter-spacing:0.050px">2023/10/1</div>
<div class="t" style="left:140.80px;top:635px;font-size:18.00px;color:#111;letter-spacing:4.500px"><span style="font-size:23.40px;line-height:0;-webkit-text-stroke:0.3px">合計</span></div>
<div class="t" style="left:226.80px;top:635px;font-size:18.00px;color:#111;letter-spacing:4.500px"><span style="font-size:23.40px;line-height:0;-webkit-text-stroke:0.3px">合計</span></div>
<div class="t" style="left:694.60px;top:635px;font-size:18.00px;color:#111;letter-spacing:1.250px"><span style="font-size:23.40px;line-height:0;-webkit-text-stroke:0.3px">国籍・地域</span></div>
<div class="t" style="left:819.40px;top:635px;font-size:18.60px;color:#111;letter-spacing:-0.914px">G7<span style="font-size:23.40px;line-height:0;-webkit-text-stroke:0.3px">（日本除く）</span></div>
<div class="t" style="left:1132.10px;top:635px;font-size:18.60px;color:#111;letter-spacing:-0.450px">2.3</div>
<div class="t" style="left:46.80px;top:665px;font-size:18.60px;color:#111;letter-spacing:0.050px">2023/10/1</div>
<div class="t" style="left:140.80px;top:665px;font-size:18.00px;color:#111;letter-spacing:4.500px"><span style="font-size:23.40px;line-height:0;-webkit-text-stroke:0.3px">合計</span></div>
<div class="t" style="left:226.80px;top:665px;font-size:18.00px;color:#111;letter-spacing:4.500px"><span style="font-size:23.40px;line-height:0;-webkit-text-stroke:0.3px">合計</span></div>
<div class="t" style="left:694.60px;top:665px;font-size:18.00px;color:#111;letter-spacing:1.250px"><span style="font-size:23.40px;line-height:0;-webkit-text-stroke:0.3px">国籍・地域</span></div>
<div class="t" style="left:819.40px;top:665px;font-size:18.60px;color:#111;letter-spacing:0.800px">(<span style="font-size:23.40px;line-height:0;-webkit-text-stroke:0.3px">うち数</span>) <span style="font-size:23.40px;line-height:0;-webkit-text-stroke:0.3px">アメリカ合衆国</span></div>
<div class="t" style="left:1132.10px;top:665px;font-size:18.60px;color:#111;letter-spacing:-0.450px">1.1</div>
<div class="t" style="left:46.80px;top:695px;font-size:18.60px;color:#111;letter-spacing:0.050px">2023/10/1</div>
<div class="t" style="left:140.80px;top:695px;font-size:18.00px;color:#111;letter-spacing:4.500px"><span style="font-size:23.40px;line-height:0;-webkit-text-stroke:0.3px">合計</span></div>
<div class="t" style="left:226.80px;top:695px;font-size:18.00px;color:#111;letter-spacing:4.500px"><span style="font-size:23.40px;line-height:0;-webkit-text-stroke:0.3px">合計</span></div>
<div class="t" style="left:694.60px;top:695px;font-size:18.00px;color:#111;letter-spacing:1.250px"><span style="font-size:23.40px;line-height:0;-webkit-text-stroke:0.3px">国籍・地域</span></div>
<div class="t" style="left:818.40px;top:695px;font-size:18.60px;color:#111;letter-spacing:1.750px"><span style="font-size:23.40px;line-height:0;-webkit-text-stroke:0.3px">その他</span></div>
<div class="t" style="left:1147.20px;top:695px;font-size:18.60px;color:#111;letter-spacing:-0.450px">4</div>
<div class="t" style="left:46.80px;top:725px;font-size:18.60px;color:#111;letter-spacing:0.050px">2023/10/1</div>
<div class="t" style="left:140.80px;top:725px;font-size:18.00px;color:#111;letter-spacing:4.500px"><span style="font-size:23.40px;line-height:0;-webkit-text-stroke:0.3px">合計</span></div>
<div class="t" style="left:226.80px;top:725px;font-size:18.00px;color:#111;letter-spacing:4.500px"><span style="font-size:23.40px;line-height:0;-webkit-text-stroke:0.3px">合計</span></div>
<div class="t" style="left:694.60px;top:725px;font-size:18.00px;color:#111;letter-spacing:1.250px"><span style="font-size:23.40px;line-height:0;-webkit-text-stroke:0.3px">国籍・地域</span></div>
<div class="t" style="left:818.40px;top:725px;font-size:18.60px;color:#111;letter-spacing:3.000px"><span style="font-size:23.40px;line-height:0;-webkit-text-stroke:0.3px">不明</span></div>
<div class="t" style="left:1132.10px;top:725px;font-size:18.60px;color:#111;letter-spacing:-0.450px">0.6</div>
<div class="t" style="left:46.80px;top:755px;font-size:18.60px;color:#111;letter-spacing:0.050px">2023/10/1</div>
<div class="t" style="left:140.80px;top:755px;font-size:18.00px;color:#111;letter-spacing:4.500px"><span style="font-size:23.40px;line-height:0;-webkit-text-stroke:0.3px">合計</span></div>
<div class="t" style="left:226.80px;top:755px;font-size:18.00px;color:#111;letter-spacing:4.500px"><span style="font-size:23.40px;line-height:0;-webkit-text-stroke:0.3px">合計</span></div>
<div class="t" style="left:694.60px;top:755px;font-size:18.00px;color:#111;letter-spacing:1.100px"><span style="font-size:23.40px;line-height:0;-webkit-text-stroke:0.3px">出身国・地域</span></div>
<div class="t" style="left:818.40px;top:755px;font-size:18.60px;color:#111;letter-spacing:3.000px"><span style="font-size:23.40px;line-height:0;-webkit-text-stroke:0.3px">日本</span></div>
<div class="t" style="left:1132.10px;top:755px;font-size:18.60px;color:#111;letter-spacing:-0.450px">3.2</div>
<div class="t" style="left:46.80px;top:785px;font-size:18.60px;color:#111;letter-spacing:0.050px">2023/10/1</div>
<div class="t" style="left:140.80px;top:785px;font-size:18.00px;color:#111;letter-spacing:4.500px"><span style="font-size:23.40px;line-height:0;-webkit-text-stroke:0.3px">合計</span></div>
<div class="t" style="left:226.80px;top:785px;font-size:18.00px;color:#111;letter-spacing:4.500px"><span style="font-size:23.40px;line-height:0;-webkit-text-stroke:0.3px">合計</span></div>
<div class="t" style="left:694.60px;top:785px;font-size:18.00px;color:#111;letter-spacing:1.100px"><span style="font-size:23.40px;line-height:0;-webkit-text-stroke:0.3px">出身国・地域</span></div>
<div class="t" style="left:818.40px;top:785px;font-size:18.60px;color:#111;letter-spacing:0.857px"><span style="font-size:23.40px;line-height:0;-webkit-text-stroke:0.3px">国籍・地域と同じ</span></div>
<div class="t" style="left:1121.55px;top:785px;font-size:18.60px;color:#111;letter-spacing:-0.450px">86.8</div>
<div class="t" style="left:46.80px;top:815px;font-size:18.60px;color:#111;letter-spacing:0.050px">2023/10/1</div>
<div class="t" style="left:140.80px;top:815px;font-size:18.00px;color:#111;letter-spacing:4.500px"><span style="font-size:23.40px;line-height:0;-webkit-text-stroke:0.3px">合計</span></div>
<div class="t" style="left:226.80px;top:815px;font-size:18.00px;color:#111;letter-spacing:4.500px"><span style="font-size:23.40px;line-height:0;-webkit-text-stroke:0.3px">合計</span></div>
<div class="t" style="left:694.60px;top:815px;font-size:18.00px;color:#111;letter-spacing:1.100px"><span style="font-size:23.40px;line-height:0;-webkit-text-stroke:0.3px">出身国・地域</span></div>
<div class="t" style="left:818.40px;top:815px;font-size:18.60px;color:#111;letter-spacing:1.750px"><span style="font-size:23.40px;line-height:0;-webkit-text-stroke:0.3px">その他</span></div>
<div class="t" style="left:1132.10px;top:815px;font-size:18.60px;color:#111;letter-spacing:-0.450px">6.6</div>
<div class="t" style="left:46.80px;top:845px;font-size:18.60px;color:#111;letter-spacing:0.050px">2023/10/1</div>
<div class="t" style="left:140.80px;top:845px;font-size:18.00px;color:#111;letter-spacing:4.500px"><span style="font-size:23.40px;line-height:0;-webkit-text-stroke:0.3px">合計</span></div>
<div class="t" style="left:226.80px;top:845px;font-size:18.00px;color:#111;letter-spacing:4.500px"><span style="font-size:23.40px;line-height:0;-webkit-text-stroke:0.3px">合計</span></div>
<div class="t" style="left:694.60px;top:845px;font-size:18.00px;color:#111;letter-spacing:1.100px"><span style="font-size:23.40px;line-height:0;-webkit-text-stroke:0.3px">出身国・地域</span></div>
<div class="t" style="left:818.40px;top:845px;font-size:18.60px;color:#111;letter-spacing:3.000px"><span style="font-size:23.40px;line-height:0;-webkit-text-stroke:0.3px">不明</span></div>
<div class="t" style="left:1132.10px;top:845px;font-size:18.60px;color:#111;letter-spacing:-0.450px">3.4</div>
<div class="t" style="left:46.80px;top:875px;font-size:18.60px;color:#111;letter-spacing:0.050px">2023/10/1</div>
<div class="t" style="left:140.80px;top:875px;font-size:18.00px;color:#111;letter-spacing:4.500px"><span style="font-size:23.40px;line-height:0;-webkit-text-stroke:0.3px">合計</span></div>
<div class="t" style="left:226.80px;top:875px;font-size:18.00px;color:#111;letter-spacing:4.500px"><span style="font-size:23.40px;line-height:0;-webkit-text-stroke:0.3px">合計</span></div>
<div class="t" style="left:694.60px;top:875px;font-size:18.00px;color:#111;letter-spacing:1.100px"><span style="font-size:23.40px;line-height:0;-webkit-text-stroke:0.3px">入職前居住地</span></div>
<div class="t" style="left:818.40px;top:875px;font-size:18.60px;color:#111;letter-spacing:3.000px"><span style="font-size:23.40px;line-height:0;-webkit-text-stroke:0.3px">日本</span></div>
<div class="t" style="left:1121.55px;top:875px;font-size:18.60px;color:#111;letter-spacing:-0.450px">48.4</div>
<div class="t" style="left:46.80px;top:905px;font-size:18.60px;color:#111;letter-spacing:0.050px">2023/10/1</div>
<div class="t" style="left:140.80px;top:905px;font-size:18.00px;color:#111;letter-spacing:4.500px"><span style="font-size:23.40px;line-height:0;-webkit-text-stroke:0.3px">合計</span></div>
<div class="t" style="left:226.80px;top:905px;font-size:18.00px;color:#111;letter-spacing:4.500px"><span style="font-size:23.40px;line-height:0;-webkit-text-stroke:0.3px">合計</span></div>
<div class="t" style="left:694.60px;top:905px;font-size:18.00px;color:#111;letter-spacing:1.100px"><span style="font-size:23.40px;line-height:0;-webkit-text-stroke:0.3px">入職前居住地</span></div>
<div class="t" style="left:818.40px;top:905px;font-size:18.60px;color:#111;letter-spacing:0.857px"><span style="font-size:23.40px;line-height:0;-webkit-text-stroke:0.3px">国籍・地域と同じ</span></div>
<div class="t" style="left:1121.55px;top:905px;font-size:18.60px;color:#111;letter-spacing:-0.450px">46.2</div>
<div class="t" style="left:46.80px;top:935px;font-size:18.60px;color:#111;letter-spacing:0.050px">2023/10/1</div>
<div class="t" style="left:140.80px;top:935px;font-size:18.00px;color:#111;letter-spacing:4.500px"><span style="font-size:23.40px;line-height:0;-webkit-text-stroke:0.3px">合計</span></div>
<div class="t" style="left:226.80px;top:935px;font-size:18.00px;color:#111;letter-spacing:4.500px"><span style="font-size:23.40px;line-height:0;-webkit-text-stroke:0.3px">合計</span></div>
<div class="t" style="left:694.60px;top:935px;font-size:18.00px;color:#111;letter-spacing:1.100px"><span style="font-size:23.40px;line-height:0;-webkit-text-stroke:0.3px">入職前居住地</span></div>
<div class="t" style="left:818.40px;top:935px;font-size:18.60px;color:#111;letter-spacing:1.750px"><span style="font-size:23.40px;line-height:0;-webkit-text-stroke:0.3px">その他</span></div>
<div class="t" style="left:1132.10px;top:935px;font-size:18.60px;color:#111;letter-spacing:-0.450px">2.4</div>
<div class="r" style="left:35px;top:126px;width:105px;height:65px;border:2px solid #0E6B38;box-sizing:border-box"></div>
<div class="r" style="left:37px;top:128px;width:101px;height:61px;border:1px solid #fff;box-sizing:border-box"></div>
<div class="r" style="left:135px;top:186px;width:7px;height:7px;background:#1B6E43;border:1px solid #fff;box-sizing:border-box"></div>
<div class="r" style="left:1894px;top:98px;width:26px;height:855px;background:#E4E8EF"></div>
<div class="r" style="left:1897px;top:99px;width:21px;height:857px;background:#F3F3F3;border-radius:10px"></div>
<svg class="a" style="left:1900px;top:102px" width="15" height="13"><path d="M7.5 2.5L13 10.5H2z" fill="#707070" stroke="#707070" stroke-width="1.2" stroke-linejoin="round"/></svg>
<div class="r" style="left:1902px;top:119px;width:11px;height:21px;background:#737373;border-radius:5.5px"></div>
<svg class="a" style="left:1900px;top:939px" width="15" height="13"><path d="M7.5 10.5L13 2.5H2z" fill="#707070" stroke="#707070" stroke-width="1.2" stroke-linejoin="round"/></svg>
<div class="r" style="left:0px;top:953px;width:1920px;height:40px;background:#E4E8EF"></div>
<div class="r" style="left:131px;top:953px;width:81px;height:10px;background:#fff"></div>
<div class="r" style="left:0px;top:953px;width:141px;height:40px;background:#E4E8EF;border-top-right-radius:8px"></div>
<div class="r" style="left:202px;top:953px;width:1718px;height:40px;background:#E4E8EF;border-top-left-radius:8px"></div>
<div class="r" style="left:141px;top:950px;width:61px;height:38px;background:#fff;border-radius:0 0 8px 8px"></div>
<svg class="a" style="left:28px;top:964px" width="14" height="16" fill="none" stroke="#8a8a8a" stroke-width="1.2"><path d="M11 2.5L5 8l6 5.5"/></svg>
<svg class="a" style="left:70px;top:964px" width="14" height="16" fill="none" stroke="#8a8a8a" stroke-width="1.2"><path d="M3 2.5L9 8l-6 5.5"/></svg>
<div class="t" style="left:151.50px;top:950px;font-size:18.50px;color:#242424;letter-spacing:-0.167px">data</div>
<div class="r" style="left:151px;top:982px;width:41px;height:3px;background:#107C41;border-radius:1px"></div>
<div class="r" style="left:207px;top:962px;width:1px;height:22px;background:#C8C8C8"></div>
<div class="t" style="left:224.60px;top:954px;font-size:18.50px;color:#242424;letter-spacing:0.275px">pivot</div>
<div class="r" style="left:284px;top:962px;width:1px;height:22px;background:#C8C8C8"></div>
<div class="r" style="left:337px;top:971px;width:15px;height:2px;background:#333"></div>
<div class="r" style="left:343px;top:964px;width:2px;height:15px;background:#333"></div>
<div class="r" style="left:1154px;top:965px;width:3px;height:3px;background:#333;border-radius:50%"></div>
<div class="r" style="left:1154px;top:971px;width:3px;height:3px;background:#333;border-radius:50%"></div>
<div class="r" style="left:1154px;top:977px;width:3px;height:3px;background:#333;border-radius:50%"></div>
<div class="r" style="left:1176px;top:962px;width:721px;height:21px;background:#F3F3F3;border-radius:10.5px"></div>
<svg class="a" style="left:1180px;top:965px" width="13" height="15"><path d="M2.5 7.5L10.5 2v11z" fill="#707070" stroke="#707070" stroke-width="1.2" stroke-linejoin="round"/></svg>
<div class="r" style="left:1197px;top:967px;width:657px;height:11px;background:#737373;border-radius:5.5px"></div>
<svg class="a" style="left:1880px;top:965px" width="13" height="15"><path d="M10.5 7.5L2.5 2v11z" fill="#707070" stroke="#707070" stroke-width="1.2" stroke-linejoin="round"/></svg>
</body></html>
